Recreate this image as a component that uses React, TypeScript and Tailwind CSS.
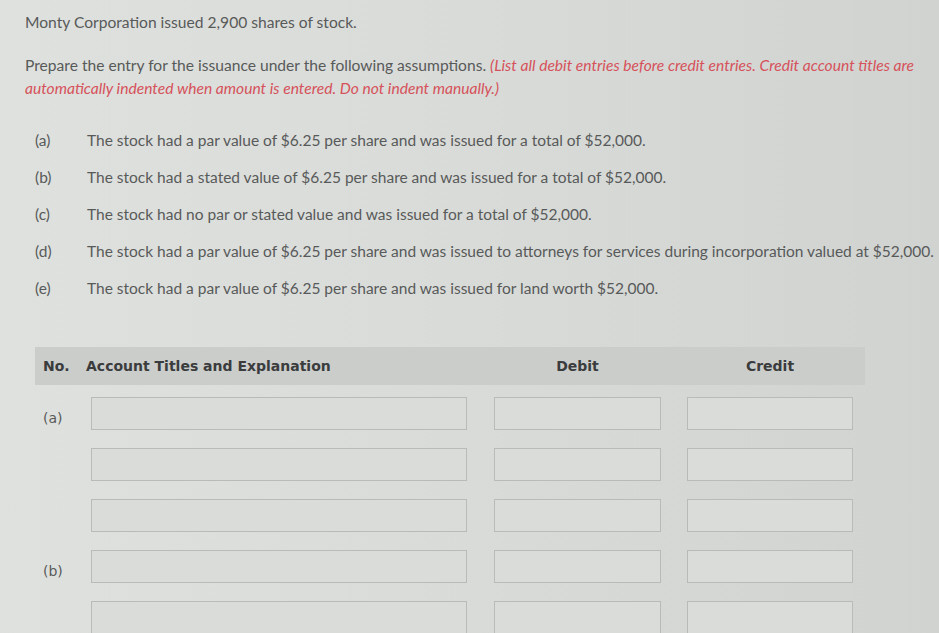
import React from "react"

const items = [
  { key: "(a)", text: "The stock had a par value of $6.25 per share and was issued for a total of $52,000." },
  { key: "(b)", text: "The stock had a stated value of $6.25 per share and was issued for a total of $52,000." },
  { key: "(c)", text: "The stock had no par or stated value and was issued for a total of $52,000." },
  { key: "(d)", text: "The stock had a par value of $6.25 per share and was issued to attorneys for services during incorporation valued at $52,000." },
  { key: "(e)", text: "The stock had a par value of $6.25 per share and was issued for land worth $52,000." },
]

const entries = [
  { label: "(a)", rows: 3 },
  { label: "(b)", rows: 3 },
]

function Box({ w }: { w: string }) {
  return <div className={`${w} h-[33px] border border-[#b9bbb8] bg-[#dadcd9] shrink-0`} />
}

export default function App() {
  return (
    <div className="w-[939px] h-[633px] overflow-hidden bg-linear-to-r from-[#dfe1de] via-[#d9dbd8] to-[#d1d3d1] font-['Lato',sans-serif] text-[#585a5a]">
      <div className="pl-[25px] pt-[11px]">
        {/* Question */}
        <p className="text-[15.6px] leading-[22px]">Monty Corporation issued 2,900 shares of stock.</p>
        <div className="mt-[21px] text-[15.6px] leading-[23px] whitespace-nowrap">
          <p>
            Prepare the entry for the issuance under the following assumptions.{" "}
            <span className="italic text-[#d6525b]">(List all debit entries before credit entries. Credit account titles are</span>
          </p>
          <p className="italic text-[#d6525b]">automatically indented when amount is entered. Do not indent manually.)</p>
        </div>

        {/* Assumptions */}
        <div className="mt-[22px] pl-[10px] flex flex-col">
          {items.map(({ key, text }) => (
            <div key={key} className="flex items-center h-[37px] text-[15.5px] whitespace-nowrap">
              <span className="w-[52px] shrink-0">{key}</span>
              <span>{text}</span>
            </div>
          ))}
        </div>
      </div>

      {/* Journal table */}
      <div className="mt-[40px] ml-[35px] w-[830px] font-['DejaVu_Sans',sans-serif]">
        <div className="flex items-center h-[38px] bg-[#cbcdcb] text-[14px] font-bold text-[#3a3c3d]">
          <span className="w-[51px] pl-[8px]">No.</span>
          <span className="w-[381px]">Account Titles and Explanation</span>
          <span className="w-[27px]" />
          <span className="w-[167px] text-center">Debit</span>
          <span className="w-[26px]" />
          <span className="w-[166px] text-center">Credit</span>
        </div>

        <div className="mt-[12px] flex flex-col gap-[18px]">
          {entries.map(({ label, rows }) =>
            Array.from({ length: rows }).map((_, i) => (
              <div key={label + i} className="flex items-center">
                <span className="w-[56px] pl-[8px] pt-[10px] text-[14px] text-[#585a5a] shrink-0">{i === 0 ? label : ""}</span>
                <Box w="w-[376px]" />
                <div className="w-[27px] shrink-0" />
                <Box w="w-[167px]" />
                <div className="w-[26px] shrink-0" />
                <Box w="w-[166px]" />
              </div>
            ))
          )}
        </div>
      </div>
    </div>
  )
}
